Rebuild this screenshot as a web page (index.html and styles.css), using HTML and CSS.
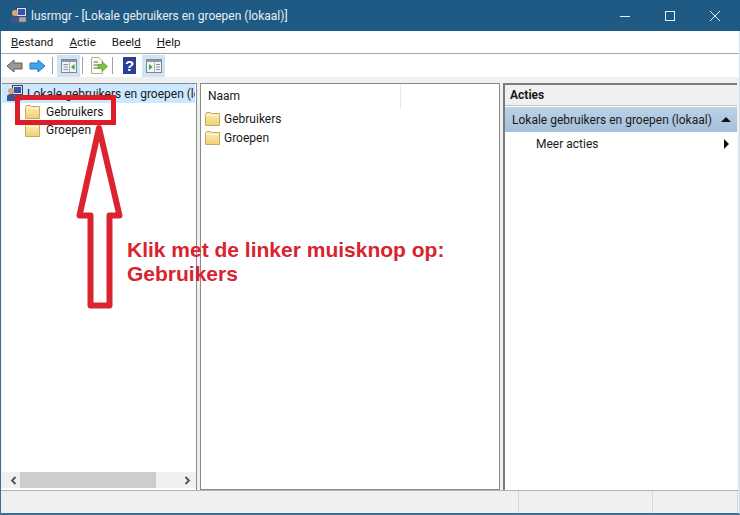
FILE: index.html
```html
<!DOCTYPE html>
<html>

<head>
    <title>lusrmgr</title>
    <link rel="stylesheet" href="styles.css">
</head>

<body>
    <svg width="0" height="0" class="defs">
        <defs>
            <linearGradient id="folderFill" x1="0" y1="0" x2="0" y2="1">
                <stop offset="0" stop-color="#fdf0b8" />
                <stop offset="1" stop-color="#f0cf78" />
            </linearGradient>
            <symbol id="folder" viewBox="0 0 15 14">
                <path d="M0.5 2.5 L0.5 13.5 L14.5 13.5 L14.5 1.5 L6.5 1.5 L5.5 0.5 L1.5 0.5 Z" fill="url(#folderFill)" stroke="#c9a95c" />
                <path d="M1 3.5 L14 3.5" stroke="#fff6d0" />
            </symbol>
            <symbol id="computer" viewBox="0 0 17 17">
                <rect x="6.5" y="0.5" width="10" height="9" fill="#dfe6f2" stroke="#38406a" />
                <rect x="8" y="2" width="7" height="6" fill="#2f55b0" />
                <rect x="9" y="10" width="7" height="5" fill="#a8a8a8" stroke="#6a6a6a" stroke-width="0.6" />
                <circle cx="5" cy="6" r="3" fill="#d9a878" />
                <path d="M1 16 L1 11.5 Q1 9 5 9 Q9 9 9 11.5 L9 16 Z" fill="#3f5688" />
            </symbol>
        </defs>
    </svg>

    <div class="window">
        <div class="titlebar">
            <svg class="app-icon" width="17" height="17"><use href="#computer" /></svg>
            <span class="title">lusrmgr - [Lokale gebruikers en groepen (lokaal)]</span>
            <div class="win-buttons">
                <svg width="12" height="12" viewBox="0 0 12 12"><path d="M1 6.5 L11 6.5" stroke="#e8f0f6" /></svg>
                <svg width="12" height="12" viewBox="0 0 12 12"><rect x="1.5" y="1.5" width="9" height="9" fill="none" stroke="#e8f0f6" /></svg>
                <svg width="12" height="12" viewBox="0 0 12 12"><path d="M1 1 L11 11 M11 1 L1 11" stroke="#e8f0f6" /></svg>
            </div>
        </div>

        <div class="menubar">
            <span><u>B</u>estand</span>
            <span><u>A</u>ctie</span>
            <span>Beel<u>d</u></span>
            <span><u>H</u>elp</span>
        </div>

        <div class="toolbar">
            <svg class="tool" width="18" height="16" viewBox="0 0 18 16">
                <path d="M1 8 L8 2 L8 5 L16 5 L16 11 L8 11 L8 14 Z" fill="#9a9a96" stroke="#5e5e5c" />
            </svg>
            <svg class="tool" width="18" height="16" viewBox="0 0 18 16">
                <path d="M17 8 L10 2 L10 5 L2 5 L2 11 L10 11 L10 14 Z" fill="#3fa4e8" stroke="#2478c0" />
            </svg>
            <i class="sep"></i>
            <div class="tool-btn active">
                <svg width="16" height="14" viewBox="0 0 16 14">
                    <rect x="0.5" y="0.5" width="15" height="13" fill="#f0f4f8" stroke="#7d8790" />
                    <rect x="1" y="1" width="14" height="2" fill="#8f98a2" />
                    <path d="M2.5 5.5 H7 M2.5 8 H7 M2.5 10.5 H7" stroke="#8a8f96" />
                    <path d="M8.5 3.5 V13" stroke="#a8b4c0" />
                    <path d="M13.5 5 L10 8 L13.5 11 Z" fill="#3f9e48" />
                </svg>
            </div>
            <i class="sep"></i>
            <div class="tool-btn">
                <svg width="18" height="17" viewBox="0 0 18 17">
                    <path d="M1.5 0.5 L9 0.5 L12.5 4 L12.5 16.5 L1.5 16.5 Z" fill="#fbfbf0" stroke="#b0ad96" />
                    <path d="M3.5 5 H8 M3.5 8 H8 M3.5 11 H8" stroke="#666" />
                    <path d="M8 7.5 L12 7.5 L12 4.5 L17.5 9.5 L12 14.5 L12 11.5 L8 11.5 Z" fill="#7cc242" stroke="#4f9a28" stroke-width="0.7" />
                </svg>
            </div>
            <i class="sep"></i>
            <div class="help-icon">?</div>
            <div class="tool-btn active">
                <svg width="16" height="14" viewBox="0 0 16 14">
                    <rect x="0.5" y="0.5" width="15" height="13" fill="#f0f4f8" stroke="#7d8790" />
                    <rect x="1" y="1" width="14" height="2" fill="#8f98a2" />
                    <path d="M3 5 L6.5 8 L3 11 Z" fill="#3f9e48" />
                    <path d="M8.5 3.5 V13" stroke="#a8b4c0" />
                    <path d="M10 5.5 H14 M10 8 H14 M10 10.5 H14" stroke="#8a8f96" />
                </svg>
            </div>
        </div>

        <div class="panes">
            <div class="pane tree">
                <div class="tree-list">
                    <div class="tree-root">
                        <svg width="17" height="17"><use href="#computer" /></svg>
                        <span>Lokale gebruikers en groepen (lokaal)</span>
                    </div>
                    <div class="tree-item"><svg width="15" height="14"><use href="#folder" /></svg><span>Gebruikers</span></div>
                    <div class="tree-item"><svg width="15" height="14"><use href="#folder" /></svg><span>Groepen</span></div>
                </div>
                <div class="hscroll">
                    <svg width="7" height="9" viewBox="0 0 7 9"><path d="M5.5 1 L2 4.5 L5.5 8" fill="none" stroke="#505050" stroke-width="1.8" /></svg>
                    <div class="track"><div class="thumb"></div></div>
                    <svg width="7" height="9" viewBox="0 0 7 9"><path d="M1.5 1 L5 4.5 L1.5 8" fill="none" stroke="#505050" stroke-width="1.8" /></svg>
                </div>
            </div>

            <div class="pane list">
                <div class="list-head"><span>Naam</span></div>
                <div class="list-item"><svg width="15" height="14"><use href="#folder" /></svg><span>Gebruikers</span></div>
                <div class="list-item"><svg width="15" height="14"><use href="#folder" /></svg><span>Groepen</span></div>
            </div>

            <div class="pane actions">
                <div class="actions-head">Acties</div>
                <div class="actions-group">
                    <span>Lokale gebruikers en groepen (lokaal)</span>
                    <i class="arrow-up"></i>
                </div>
                <div class="actions-row">
                    <span>Meer acties</span>
                    <i class="arrow-right"></i>
                </div>
            </div>
        </div>

        <div class="statusbar">
            <div class="cell-a"></div>
            <div class="cell-b"></div>
            <div class="cell-c"></div>
        </div>
    </div>

    <!-- annotation on top of the screenshot -->
    <div class="redbox"></div>
    <svg class="red-arrow" width="48" height="194" viewBox="0 0 48 194">
        <path d="M23 6 L3.5 93.5 L14.5 93.5 L14.5 183.5 L33.5 183.5 L33.5 93.5 L43.5 93.5 Z" fill="none" stroke="#dc2430" stroke-width="6" stroke-linejoin="round" />
    </svg>
    <div class="note">Klik met de linker muisknop op:<br>Gebruikers</div>
</body>

</html>
```

FILE: styles.css
```css
html, body {
    margin: 0;
    padding: 0;
}

body {
    width: 740px;
    height: 515px;
    overflow: hidden;
    position: relative;
    font-family: Roboto, "Open Sans", sans-serif;
    font-size: 12px;
    color: #1a1a1a;
    background-color: #f0f0f0;
}

.defs {
    display: block;
    height: 0;
}

.window {
    width: 740px;
    height: 515px;
    display: flex;
    flex-direction: column;
    box-sizing: border-box;
    border-left: 1px solid #3f6f94;
    border-right: 1px solid #cfe0ea;
    border-bottom: 2px solid #3f6f94;
}

.titlebar {
    height: 31px;
    flex: none;
    margin: 0 -1px;
    background-color: #1f5a84;
    color: #e6eef4;
    display: flex;
    align-items: center;
    padding-left: 10px;
    font-size: 12px;
}

.app-icon {
    margin-right: 4px;
    flex: none;
}

.win-buttons {
    margin-left: auto;
    display: flex;
    gap: 33px;
    padding-right: 19px;
}

.menubar {
    height: 22px;
    flex: none;
    background-color: #fff;
    border-bottom: 1px solid #a9a9a9;
    display: flex;
    align-items: center;
    gap: 16px;
    padding-left: 10px;
    font-size: 11.6px;
}

.toolbar {
    height: 23px;
    flex: none;
    background-color: #fff;
    display: flex;
    align-items: center;
    padding-left: 5px;
}

.tool {
    margin-right: 4px;
}

.sep {
    width: 1px;
    height: 17px;
    background-color: #a0a0a0;
    margin: 0 4px 0 2px;
}

.tool-btn {
    width: 23px;
    height: 22px;
    display: flex;
    align-items: center;
    justify-content: center;
}

.tool-btn.active {
    background-color: #cfe4f6;
}

.help-icon {
    width: 13px;
    height: 17px;
    margin: 0 6px;
    background-color: #2c3f96;
    color: #fff;
    font-family: "Liberation Sans", sans-serif;
    font-weight: bold;
    font-size: 15px;
    line-height: 17px;
    text-align: center;
}

.panes {
    flex: 1;
    min-height: 0;
    display: grid;
    grid-template-columns: 195px 300px 235px;
    column-gap: 3px;
    padding: 6px 1px 0 1px;
    background-color: #f0f0f0;
    border-bottom: 1px solid #b4b4b4;
}

.pane {
    background-color: #fff;
    box-sizing: border-box;
    min-width: 0;
    min-height: 0;
    overflow: hidden;
}

.tree {
    border-top: 1px solid #8a8a8a;
    border-right: 1px solid #8a8a8a;
    display: flex;
    flex-direction: column;
}

.tree-list {
    flex: 1;
    min-height: 0;
    overflow: hidden;
    white-space: nowrap;
}

.tree-root {
    height: 19px;
    display: flex;
    align-items: center;
    gap: 4px;
    padding-left: 4px;
    background-color: #cce8ff;
    width: 189px;
    overflow: hidden;
}

.tree-root span {
    padding-top: 1px;
}

.tree-root svg, .tree-item svg, .list-item svg {
    flex: none;
}

.tree-item {
    height: 18px;
    display: flex;
    align-items: center;
    gap: 6px;
    padding-left: 23px;
}

.hscroll {
    height: 16px;
    flex: none;
    background-color: #f0f0f0;
    display: flex;
    align-items: center;
    padding: 0 5px 0 8px;
    margin-bottom: 2px;
}

.track {
    flex: 1;
    height: 16px;
    margin: 0 3px;
}

.thumb {
    width: 136px;
    height: 100%;
    background-color: #cdcdcd;
}

.list {
    border: 1px solid #8a8a8a;
}

.list-head {
    height: 25px;
    box-sizing: border-box;
    padding: 0 0 0 7px;
    font-size: 12px;
}

.list-head span {
    width: 193px;
    height: 100%;
    box-sizing: border-box;
    padding-bottom: 1px;
    display: flex;
    align-items: center;
    border-right: 1px solid #eaeaea;
}

.list-item {
    height: 19px;
    display: flex;
    align-items: center;
    gap: 4px;
    padding-left: 4px;
}

.actions {
    border-top: 2px solid #7c7c7c;
    border-left: 2px solid #7c7c7c;
    width: 234px;
}

.actions-head {
    height: 20px;
    line-height: 21px;
    padding-left: 5px;
    font-weight: bold;
    background-color: #f0f0f0;
    border-bottom: 1px solid #b8c4cc;
}

.actions-group {
    height: 25px;
    display: flex;
    align-items: center;
    padding-left: 7px;
    margin-top: 1px;
    background: linear-gradient(#bdd2e6, #a3bfdb);
}

.arrow-up {
    margin-left: auto;
    margin-right: 6px;
    border-left: 5px solid transparent;
    border-right: 5px solid transparent;
    border-bottom: 5px solid #111;
}

.actions-row {
    height: 23px;
    display: flex;
    align-items: center;
    padding-left: 31px;
}

.arrow-right {
    margin-left: auto;
    margin-right: 8px;
    border-top: 5px solid transparent;
    border-bottom: 5px solid transparent;
    border-left: 5px solid #111;
}

.statusbar {
    flex: none;
    height: 22px;
    display: flex;
    background-color: #f0f0f0;
}

.statusbar div {
    box-sizing: border-box;
    border-right: 1px solid #d8d8d8;
}

.cell-a {
    width: 518px;
}

.cell-b {
    width: 134px;
}

.cell-c {
    width: 85px;
}

.redbox {
    position: absolute;
    left: 15px;
    top: 95px;
    width: 101px;
    height: 30px;
    box-sizing: border-box;
    border: 5px solid #dc1c28;
}

.red-arrow {
    position: absolute;
    left: 76px;
    top: 122px;
}

.note {
    position: absolute;
    left: 127px;
    top: 238px;
    font-family: "Liberation Sans", Arial, sans-serif;
    font-weight: bold;
    font-size: 21px;
    line-height: 24px;
    color: #d9232e;
    white-space: nowrap;
}
```
